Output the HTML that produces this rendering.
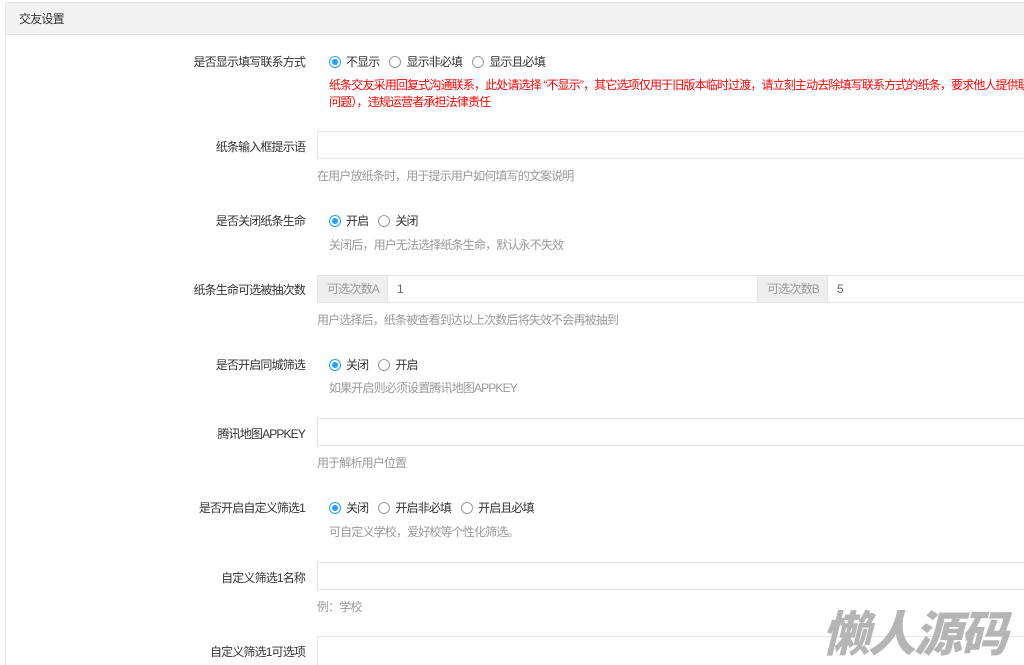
<!DOCTYPE html>
<html><head><meta charset="utf-8"><style>
*{margin:0;padding:0;box-sizing:border-box}
html,body{width:1024px;height:665px;overflow:hidden}
body{background:#fff;font-family:"Liberation Sans","Noto Sans CJK SC",sans-serif;font-size:12px;color:#333;position:relative}
#w{position:absolute;left:0;top:0;width:1024px;height:665px;overflow:hidden}
.panel{position:absolute;left:5px;top:2px;width:1019px;height:663px;border:1px solid #e6e6e6;border-right:none;border-bottom:none}
.hd{height:32px;background:#f2f2f2;border-bottom:1px solid #e6e6e6;padding-left:13px;line-height:32px;color:#333;letter-spacing:-0.8px}
.a{position:absolute;white-space:nowrap;letter-spacing:-0.85px}
.lbl{right:719px;text-align:right}
.help{color:#999}
.red{color:#f00;left:329px;width:695px;overflow:hidden}
.inp{position:absolute;left:317px;width:707px;height:28px;border:1px solid #e6e6e6;border-right:none;background:#fff}
.r{display:inline-block;width:12px;height:12px;border:1px solid #999;border-radius:50%;vertical-align:-2px;margin-right:5px;position:relative}
.r.on{border-color:#1E9FFF}
.r.on:after{content:"";position:absolute;left:2px;top:2px;width:6px;height:6px;border-radius:50%;background:#1E9FFF}
.opt{margin-right:10px}
.add{position:absolute;height:28px;background:#eee;border:1px solid #e6e6e6;color:#999;line-height:26px;padding-left:9px;letter-spacing:-0.8px;white-space:nowrap}
.wm{position:absolute;left:822px;top:597px;height:66px;font-size:48px;line-height:66px;font-weight:900;font-style:italic;color:#b5b5b5;letter-spacing:-2px;font-family:"Noto Sans CJK SC",sans-serif;white-space:nowrap}
</style></head><body><div id="w">
<div class="panel"><div class="hd">交友设置</div></div>

<div class="a lbl" style="top:53px">是否显示填写联系方式</div>
<div class="a" style="left:329px;top:53px"><span class="opt"><i class="r on"></i>不显示</span><span class="opt"><i class="r"></i>显示非必填</span><span class="opt"><i class="r"></i>显示且必填</span></div>
<div class="a red" style="top:76px">纸条交友采用回复式沟通联系，此处请选择 “不显示”，其它选项仅用于旧版本临时过渡，请立刻主动去除填写联系方式的纸条，要求他人提供联系方式的</div>
<div class="a red" style="top:93px">问题），违规运营者承担法律责任</div>

<div class="a lbl" style="top:138px">纸条输入框提示语</div>
<div class="inp" style="top:131px"></div>
<div class="a help" style="left:317px;top:167px">在用户放纸条时，用于提示用户如何填写的文案说明</div>

<div class="a lbl" style="top:212px">是否关闭纸条生命</div>
<div class="a" style="left:329px;top:212px"><span class="opt"><i class="r on"></i>开启</span><span class="opt"><i class="r"></i>关闭</span></div>
<div class="a help" style="left:329px;top:236px">关闭后，用户无法选择纸条生命，默认永不失效</div>

<div class="a lbl" style="top:281px">纸条生命可选被抽次数</div>
<div class="add" style="left:317px;top:275px;width:71px">可选次数A</div>
<div class="inp" style="left:387px;top:275px;width:371px;border-right:1px solid #e6e6e6;padding-left:9px;line-height:26px;color:#666">1</div>
<div class="add" style="left:757px;top:275px;width:71px">可选次数B</div>
<div class="inp" style="left:827px;top:275px;width:197px;padding-left:9px;line-height:26px;color:#666">5</div>
<div class="a help" style="left:317px;top:311px">用户选择后，纸条被查看到达以上次数后将失效不会再被抽到</div>

<div class="a lbl" style="top:356px">是否开启同城筛选</div>
<div class="a" style="left:329px;top:356px"><span class="opt"><i class="r on"></i>关闭</span><span class="opt"><i class="r"></i>开启</span></div>
<div class="a help" style="left:329px;top:379px">如果开启则必须设置腾讯地图APPKEY</div>

<div class="a lbl" style="top:425px">腾讯地图APPKEY</div>
<div class="inp" style="top:418px"></div>
<div class="a help" style="left:317px;top:454px">用于解析用户位置</div>

<div class="a lbl" style="top:499px">是否开启自定义筛选1</div>
<div class="a" style="left:329px;top:499px"><span class="opt"><i class="r on"></i>关闭</span><span class="opt"><i class="r"></i>开启非必填</span><span class="opt"><i class="r"></i>开启且必填</span></div>
<div class="a help" style="left:329px;top:523px">可自定义学校，爱好校等个性化筛选。</div>

<div class="a lbl" style="top:569px">自定义筛选1名称</div>
<div class="inp" style="top:562px"></div>
<div class="a help" style="left:317px;top:598px">例：学校</div>

<div class="a lbl" style="top:643px">自定义筛选1可选项</div>
<div class="inp" style="top:636px;height:29px;border-bottom:none"></div>

<div class="wm">懒人源码</div>
</div></body></html>
